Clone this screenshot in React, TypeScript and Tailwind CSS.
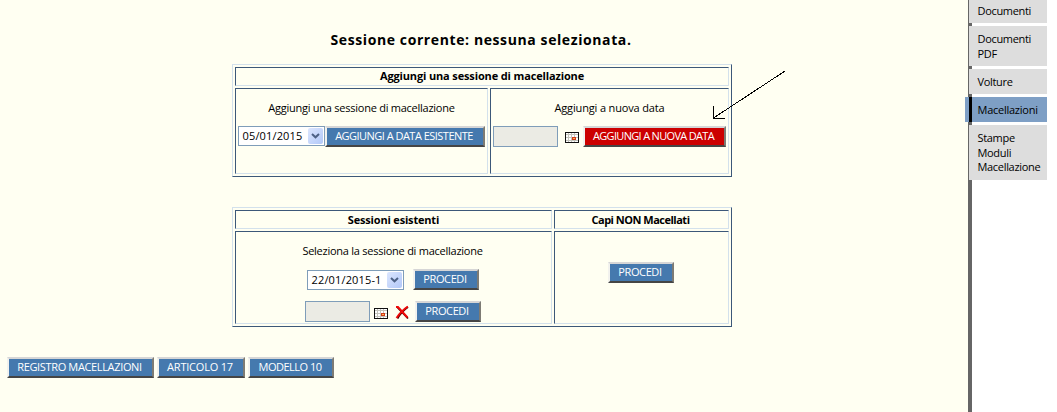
import React from "react";

function Button({ children, className = "" }: { children: React.ReactNode; className?: string }) {
  return (
    <button
      className={`block h-[21px] shrink-0 whitespace-nowrap border-2 border-t-[#d6d6d6] border-r-[#7d7b74] border-b-[#454545] border-l-[#f2f2ee] pr-[2px] pb-[2px] text-center text-[11px] leading-[15px] text-white ${className}`}
    >
      {children}
    </button>
  );
}

function Select({ value, className = "" }: { value: string; className?: string }) {
  return (
    <div className={`flex h-5 shrink-0 items-center justify-between border border-[#7f9db9] bg-white pr-px pl-[3.5px] ${className}`}>
      <span className="text-[11px] leading-[18px] tracking-[0.15px]">{value}</span>
      <span className="flex h-4 w-[15px] items-center justify-center rounded-[2px] bg-linear-to-br from-[#dce6fe] to-[#b2c8f8]">
        <svg width="9" height="6" viewBox="0 0 9 6" fill="none">
          <path d="M1 1L4.5 4.3L8 1" stroke="#4d6185" strokeWidth="2" />
        </svg>
      </span>
    </div>
  );
}

function DateInput() {
  return <div className="h-[21px] w-[65px] shrink-0 border border-[#7f9db9] bg-[#ebebe4]" />;
}

function CalendarIcon({ className = "" }: { className?: string }) {
  return (
    <svg className={`shrink-0 ${className}`} width="14" height="11" viewBox="0 0 14 11" shapeRendering="crispEdges">
      <rect width="14" height="11" fill="#111" />
      <rect x="1" y="1" width="12" height="9" fill="#fff" />
      <g fill="#c4c4bc">
        <rect x="1" y="2" width="12" height="1" />
        <rect x="1" y="5" width="12" height="1" />
        <rect x="1" y="8" width="12" height="1" />
        <rect x="3" y="1" width="1" height="9" />
        <rect x="6" y="1" width="1" height="9" />
        <rect x="9" y="1" width="1" height="9" />
      </g>
      <rect x="7" y="5" width="4" height="3" fill="#d03a1c" />
      <rect x="8" y="6" width="2" height="1" fill="#ffb54a" />
    </svg>
  );
}

function DeleteIcon({ className = "" }: { className?: string }) {
  return (
    <svg className={`shrink-0 ${className}`} width="14" height="15" viewBox="0 0 14 15" fill="none">
      <path d="M2 2L13 13.5M13 2Q6 7 2.5 13.5" stroke="#4d0000" strokeWidth="1.8" />
      <path d="M1 2L3 2L12.5 12.5M12.800 1.500Q5.500 6.500 1.500 13" stroke="#f00808" strokeWidth="1.9" />
    </svg>
  );
}

const outer = "ml-[232px] flex w-[500px] flex-col gap-[2px] border border-t-[#d3e1ec] border-l-[#d3e1ec] border-r-[#3c5879] border-b-[#3c5879] p-[2px]";
const cell = "border border-t-[#3c5879] border-l-[#3c5879] border-r-[#d3e1ec] border-b-[#d3e1ec]";
const head = "h-[19px] text-center text-[11px] font-bold whitespace-nowrap";
const label = "text-center text-[11px] leading-[16px] whitespace-nowrap";

function SideItem({ children, className = "" }: { children: React.ReactNode; className?: string }) {
  return (
    <div className={`ml-px w-[78px] shrink-0 bg-[#dddddd] pl-[8.5px] text-[11px] leading-[14.5px] tracking-[-0.32px] whitespace-nowrap ${className}`}>
      {children}
    </div>
  );
}

export default function App() {
  return (
    <div className="relative flex h-[412px] w-[1057px] overflow-hidden bg-white font-['Open_Sans',sans-serif] text-black">
      <main className="h-full w-[968px] shrink-0 bg-[#fffff2]">
        <h1 className="ml-[231px] h-16 w-[500px] pt-[30px] text-center text-[14px] leading-[20px] font-bold tracking-[0.6px] whitespace-nowrap">
          Sessione corrente: nessuna selezionata.
        </h1>
        <section className={`${outer} h-[113px]`}>
          <div className={`${cell} ${head} leading-[16px] tracking-[-0.14px]`}>Aggiungi una sessione di macellazione</div>
          <div className="flex h-[86px] gap-[2px]">
            <div className={`${cell} w-[253px] px-[2px] pt-[11px]`}>
              <div className={`${label} tracking-[-0.25px]`}>Aggiungi una sessione di macellazione</div>
              <div className="mt-[10px] flex">
                <Select value="05/01/2015" className="w-[87px]" />
                <Button className="w-[160px] bg-[#4579ae] tracking-[-0.52px]">AGGIUNGI A DATA ESISTENTE</Button>
              </div>
            </div>
            <div className={`${cell} w-[239px] px-[2px] pt-[11px]`}>
              <div className={`${label} tracking-[-0.15px]`}>Aggiungi a nuova data</div>
              <div className="mt-[10px] flex">
                <DateInput />
                <CalendarIcon className="mt-[6px] ml-[7px]" />
                <Button className="ml-1 w-[143px] bg-[#cc0000] tracking-[-0.68px]">AGGIUNGI A NUOVA DATA</Button>
              </div>
            </div>
          </div>
        </section>

        <section className={`${outer} mt-[30px] h-[120px]`}>
          <div className="flex gap-[2px]">
            <div className={`${cell} ${head} w-[317px] leading-[17px] tracking-[-0.18px]`}>Sessioni esistenti</div>
            <div className={`${cell} ${head} w-[175px] pr-[2px] leading-[17px] tracking-[-0.5px]`}>Capi NON Macellati</div>
          </div>
          <div className="flex h-[93px] gap-[2px]">
            <div className={`${cell} w-[317px] pt-[11px]`}>
              <div className={`${label} pr-[2px] tracking-[-0.25px]`}>Seleziona la sessione di macellazione</div>
              <div className="mt-[10px] ml-[71px] flex">
                <Select value="22/01/2015-1" className="mt-px w-[97px]" />
                <Button className="ml-[9px] w-[66px] bg-[#4579ae] tracking-[-0.4px]">PROCEDI</Button>
              </div>
              <div className="mt-[11px] ml-[69px] flex">
                <DateInput />
                <CalendarIcon className="mt-[7px] ml-1" />
                <DeleteIcon className="mt-1 ml-[7px]" />
                <Button className="ml-[6px] w-[66px] bg-[#4579ae] tracking-[-0.4px]">PROCEDI</Button>
              </div>
            </div>
            <div className={`${cell} w-[175px] pt-[30px] pl-[53px]`}>
              <Button className="w-[66px] bg-[#4579ae] tracking-[-0.4px]">PROCEDI</Button>
            </div>
          </div>
        </section>

        <div className="mt-[30px] ml-[7px] flex gap-[3px]">
          <Button className="w-[147px] bg-[#4579ae] tracking-[-0.35px]">REGISTRO MACELLAZIONI</Button>
          <Button className="w-[88px] bg-[#4579ae] tracking-[-0.2px]">ARTICOLO 17</Button>
          <Button className="w-[86px] bg-[#4579ae] tracking-[-0.5px]">MODELLO 10</Button>
        </div>
      </main>

      <nav className="flex h-full w-[89px] flex-col gap-[3px] bg-linear-to-r from-[#666666] from-[4px] to-white to-[4px]">
        <SideItem className="h-[23px] pt-[4px]">Documenti</SideItem>
        <SideItem className="h-[40px] pt-[6px]">Documenti<br />PDF</SideItem>
        <SideItem className="h-[25px] pt-[6px]">Volture</SideItem>
        <div className="-ml-[3px] flex h-[25px] w-[82px] bg-[#7e9fc5]">
          <span className="ml-1 w-[3px] bg-black" />
          <span className="pt-[6px] pl-[5.5px] text-[11px] leading-[14.5px] tracking-[-0.25px]">Macellazioni</span>
        </div>
        <SideItem className="h-[55px] pt-[6px]">Stampe<br />Moduli<br />Macellazione</SideItem>
      </nav>

      <svg className="absolute top-[68px] left-[708px]" width="82" height="54" viewBox="0 0 82 54" fill="none" shapeRendering="crispEdges">
        <path d="M77 3L5.500 50M5.500 38V50.500H17" stroke="#000" />
      </svg>
    </div>
  );
}
